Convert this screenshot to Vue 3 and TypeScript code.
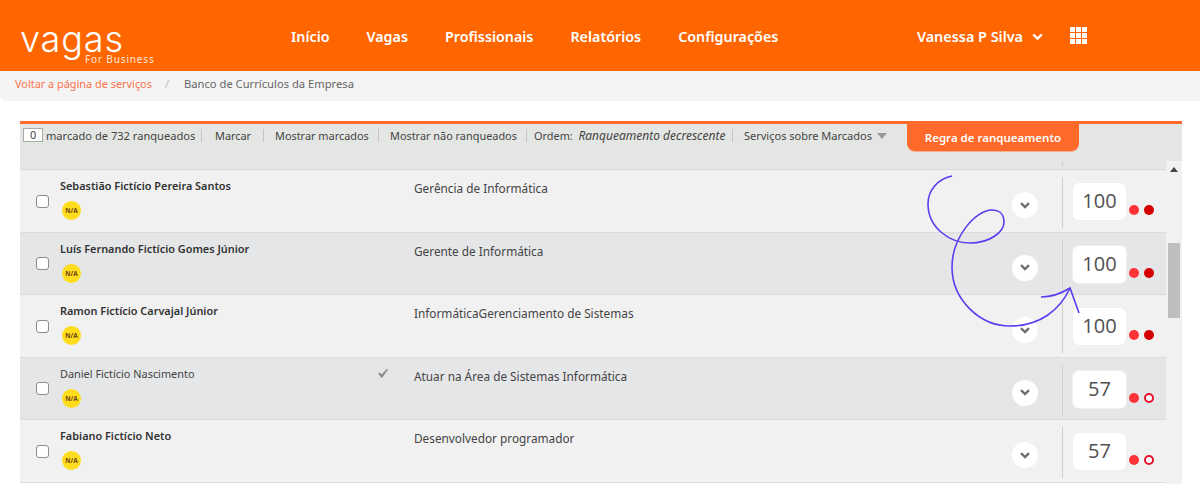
<script setup lang="ts">
interface Row { name: string; title: string; score: number; second: boolean; bold: boolean; seen: boolean }
const rows: Row[] = [
  { name: 'Sebastião Fictício Pereira Santos', title: 'Gerência de Informática', score: 100, second: true, bold: true, seen: false },
  { name: 'Luís Fernando Fictício Gomes Júnior', title: 'Gerente de Informática', score: 100, second: true, bold: true, seen: false },
  { name: 'Ramon Fictício Carvajal Júnior', title: 'InformáticaGerenciamento de Sistemas', score: 100, second: true, bold: true, seen: false },
  { name: 'Daniel Fictício Nascimento', title: 'Atuar na Área de Sistemas Informática', score: 57, second: false, bold: false, seen: true },
  { name: 'Fabiano Fictício Neto', title: 'Desenvolvedor programador', score: 57, second: false, bold: true, seen: false },
]
const nav = ['Início', 'Vagas', 'Profissionais', 'Relatórios', 'Configurações']
</script>

<template>
  <div class="page">
    <header class="top">
      <div class="logo">
        <span class="logo-word">vagas</span>
        <span class="logo-sub">For Business</span>
      </div>
      <nav class="nav">
        <a v-for="n in nav" :key="n">{{ n }}</a>
      </nav>
      <div class="user">
        <span>Vanessa P Silva</span>
        <svg width="11" height="8" viewBox="0 0 11 8"><path d="M1.2 1.5 5.5 5.6 9.8 1.5" fill="none" stroke="#fff" stroke-width="2.4" /></svg>
      </div>
      <div class="apps"><i v-for="i in 9" :key="i"></i></div>
    </header>

    <div class="crumb">
      <a>Voltar a página de serviços</a>
      <span class="slash">/</span>
      <span class="here">Banco de Currículos da Empresa</span>
    </div>

    <main class="panel">
      <div class="toolbar">
        <div class="tools">
          <span class="count">0</span>
          <span class="tool t0">marcado de 732 ranqueados</span>
          <span class="tool t1">Marcar</span>
          <span class="tool t2">Mostrar marcados</span>
          <span class="tool t3">Mostrar não ranqueados</span>
          <span class="tool t4">Ordem:&nbsp; <em>Ranqueamento decrescente</em></span>
          <span class="tool t5">Serviços sobre Marcados <b class="tri"></b></span>
          <button class="rule">Regra de ranqueamento</button>
        </div>
        <div class="band"><i class="tick"></i></div>
      </div>
      <div class="body">
        <div class="list">
          <div v-for="(r, i) in rows" :key="r.name" class="row" :class="{ alt: i % 2 === 1 }">
            <span class="check"></span>
            <div class="who">
              <div class="name" :class="{ strong: r.bold }">{{ r.name }}</div>
              <span class="badge">N/A</span>
            </div>
            <div class="mark">
              <svg v-if="r.seen" width="12" height="11" viewBox="0 0 12 11"><path d="M1.2 5.6 3 4.4 4.6 6.4 10 0.8 11 1.6 4.8 10.2 Z" fill="#8a8a8a" /></svg>
            </div>
            <div class="title">{{ r.title }}</div>
            <span class="more">
              <svg width="10" height="7" viewBox="0 0 10 7"><path d="M1 1.2 5 5 9 1.2" fill="none" stroke="#6e6e6e" stroke-width="2.4" /></svg>
            </span>
            <div class="score">
              <span class="num">{{ r.score }}</span>
              <span class="dot"></span>
              <span class="dot" :class="r.second ? 'dark' : 'hollow'"></span>
            </div>
          </div>
        </div>
        <div class="track">
          <b class="up"></b>
          <span class="thumb"></span>
        </div>
      </div>
    </main>

    <svg class="scribble" width="1200" height="484" viewBox="0 0 1200 484">
      <path d="M952 176C937 179 928 191 928 204C928 228 950 243 970 243C990 243 1004 232 1004 222C1004 213 998 210 992 210C975 210 952 238 952 267C952 300 980 326 1010 326C1040 326 1060 310 1070 288" />
      <path d="M1041 297C1052 297 1062 293 1070 288L1079 313" />
    </svg>
  </div>
</template>

<style scoped>
.page { position: relative; width: 1200px; height: 484px; overflow: hidden; background: #fff; font-family: "Noto Sans", sans-serif; color: #444; }
.top { height: 71px; background: #ff6600; display: flex; align-items: flex-start; color: #fff; box-sizing: border-box; padding-left: 20px; }
.logo { width: 250px; position: relative; height: 71px; flex: none; }
.logo-word { position: absolute; left: 0; top: 18px; font: 300 36px/42px Inter, sans-serif; color: #fff; letter-spacing: .9px; }
.logo-sub { position: absolute; left: 65px; top: 52px; font: 400 10px/14px "Noto Sans", sans-serif; letter-spacing: .85px; color: #ffe6d5; }
.nav { display: flex; gap: 37px; margin-left: 21px; padding-top: 27px; }
.nav a { font-size: 14.3px; line-height: 20px; font-weight: 600; }
.user { margin-left: auto; display: flex; align-items: center; gap: 9px; padding-top: 27px; font-size: 14.4px; line-height: 20px; font-weight: 600; }
.apps { display: grid; grid-template-columns: repeat(3, 5px); grid-auto-rows: 5px; gap: 1px; margin: 27px 113px 0 27px; }
.apps i { background: #fff; display: block; }
.crumb { height: 30px; background: #f4f4f4; border-radius: 0 0 0 5px; display: flex; align-items: center; padding: 0 0 6px 15px; box-sizing: border-box; }
.crumb a { color: #f9734c; font-size: 10.9px; }
.slash { color: #bbb; font-size: 11px; margin: 0 15px 0 13px; }
.here { color: #666; font-size: 11.2px; }
.panel { margin: 20px 18px 0 20px; }
.toolbar { height: 49px; background: #e4e6e3; border-top: 3px solid #ff6a2a; box-sizing: border-box; display: flex; flex-direction: column; justify-content: space-between; }
.tools { display: flex; align-items: flex-start; padding-left: 3px; font-size: 10.9px; color: #444; }
.band { height: 9px; background: #e5e6e8; border-bottom: 1px solid #dadada; position: relative; box-sizing: border-box; }
.tick { position: absolute; left: 1042px; top: 0; width: 1px; height: 5px; background: #cfcfcf; }
.count { width: 20px; height: 14px; margin-top: 4px; background: #fff; border: 1px solid #aaa; box-sizing: border-box; line-height: 12px; text-align: center; flex: none; }
.tool { height: 13px; margin-top: 5px; line-height: 13px; border-right: 1px solid #c3c5c3; white-space: nowrap; box-sizing: content-box; }
.t0 { margin-left: 3px; width: 155px; font-size: 11.1px; }
.t1 { margin-left: 13px; width: 48px; }
.t2 { margin-left: 11px; width: 103px; }
.t3 { margin-left: 11px; width: 136px; }
.t4 { margin-left: 7px; width: 198px; }
.t4 em { font-style: italic; font-size: 12px; }
.t5 { margin-left: 11px; border: 0; width: 163px; font-size: 11px; }
.tri { display: inline-block; margin-left: 2px; border: 5px solid transparent; border-top: 6px solid #999; border-bottom: 0; vertical-align: 1px; }
.rule { width: 172px; height: 27px; border: 0; border-radius: 0 0 8px 8px; background: #ff6a2a; color: #fff; font: 600 11.5px/27px "Noto Sans", sans-serif; padding: 0; flex: none; box-shadow: 0 1px 0 #f8b08f; }
.body { display: flex; align-items: flex-start; }
.list { width: 1146px; flex: none; }
.row { height: 62.5px; box-sizing: border-box; background: #f1f1f1; border-bottom: 1px solid #dcdcdc; display: flex; align-items: flex-start; position: relative; }
.alt { background: #e5e6e8; }
.check { width: 13px; height: 13px; margin: 24.5px 0 0 16px; background: #fff; border: 1.5px solid #8c8c8c; border-radius: 3px; box-sizing: border-box; flex: none; }
.who { width: 316px; margin-left: 11px; padding-top: 9px; flex: none; }
.name { font-size: 10.9px; line-height: 14px; color: #444; }
.strong { font-weight: 600; color: #333; }
.badge { display: block; width: 19px; height: 19px; margin: 8px 0 0 2px; border-radius: 50%; background: #ffdd1e; color: #6f4510; font: 700 6.5px/19px "Noto Sans", sans-serif; text-align: center; }
.mark { width: 18px; margin-left: 1px; padding-top: 4px; flex: none; }
.title { width: 590px; margin-left: 19px; padding-top: 11px; font-size: 11.8px; line-height: 14px; color: #444; flex: none; }
.more { position: absolute; left: 992px; top: 22px; width: 26px; height: 26px; border-radius: 50%; background: #fff; display: flex; align-items: center; justify-content: center; }
.score { position: absolute; left: 1042px; top: 7px; height: 51px; border-left: 1px solid #cfcfcf; padding-left: 10px; display: flex; align-items: flex-start; }
.num { width: 53px; height: 37px; margin-top: 6px; border-radius: 6px; background: #fff; color: #505050; font: 500 20px/36px "Open Sans", sans-serif; text-align: center; box-shadow: 0 0 0 1px #f0f0f0; }
.dot { width: 10px; height: 10px; margin: 28px 0 0 3px; border-radius: 50%; background: #ff3338; box-sizing: border-box; }
.dot.dark { background: #d40000; margin-left: 5px; }
.dot.hollow { background: #fff; border: 2px solid #e8102a; margin-left: 5px; }
.track { width: 16px; position: relative; margin-top: -9px; background: #f1f1f1; height: 323px; flex: none; }
.up { position: absolute; left: 4px; top: 6px; border: 4px solid transparent; border-bottom: 5px solid #444; border-top: 0; }
.thumb { display: block; width: 12px; height: 75px; background: #bebebe; margin: 82px 0 0 2px; }
.scribble { position: absolute; left: 0; top: 0; pointer-events: none; }
.scribble path { fill: none; stroke: #5a3df0; stroke-width: 1.6; }
</style>
